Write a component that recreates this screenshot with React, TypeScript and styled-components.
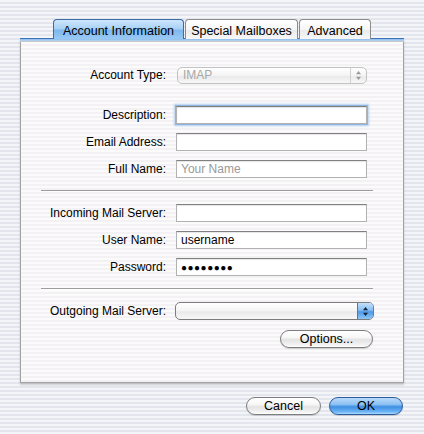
import React from "react";
import styled, { createGlobalStyle } from "styled-components";

const GlobalStyle = createGlobalStyle`
  html, body {
    margin: 0;
    padding: 0;
  }
  body {
    font-family: "Liberation Sans", Arial, sans-serif;
    font-size: 12px;
    color: #000;
  }
`;

const Window = styled.div`
  width: 424px;
  height: 434px;
  box-sizing: border-box;
  padding-top: 19px;
  background: repeating-linear-gradient(
    to bottom,
    #f4f5f8 0px,
    #f4f5f8 2px,
    #e4e6ee 2px,
    #e4e6ee 4px
  );
  overflow: hidden;
`;

const TabBar = styled.div`
  display: flex;
  justify-content: center;
  gap: 1px;
  height: 19px;
  position: relative;
  z-index: 1;
`;

const Tab = styled.div<{ $active?: boolean; $width: number }>`
  width: ${(p) => p.$width}px;
  box-sizing: border-box;
  height: 20px;
  display: flex;
  align-items: center;
  justify-content: center;
  font-size: 12.5px;
  border: 1px solid ${(p) => (p.$active ? "#3e6aa6" : "#8b8b8b")};
  border-bottom: none;
  border-radius: 4px 4px 0 0;
  background: ${(p) =>
    p.$active
      ? "linear-gradient(to bottom, #cfe6fb 0%, #a9d1f6 45%, #7fb8ef 55%, #99c9f5 100%)"
      : "linear-gradient(to bottom, #ffffff 0%, #f6f6f6 50%, #ebebeb 55%, #f7f7f7 100%)"};
  padding-top: 2px;
`;

const Panel = styled.div`
  margin: 0 20px;
  height: 345px;
  box-sizing: border-box;
  border: 1px solid #a3a3a3;
  border-top: none;
  box-shadow: 0 2px 2px rgba(0, 0, 0, 0.18);
  background: repeating-linear-gradient(
    to bottom,
    #fcfbfc 0px,
    #fcfbfc 2px,
    #f3f1f4 2px,
    #f3f1f4 4px
  );
  display: flex;
  flex-direction: column;
`;

const Band = styled.div`
  height: 4px;
  box-sizing: border-box;
  margin: 0 -1px;
  border-top: 1px solid #3f73b8;
  background: linear-gradient(to bottom, #8dbcee, #b7d4ef);
  border-bottom: 1px solid #c9c9c9;
`;

const Row = styled.div<{ $top: number }>`
  display: flex;
  align-items: center;
  height: 18px;
  margin-top: ${(p) => p.$top}px;
`;

const Label = styled.div`
  width: 145px;
  text-align: right;
  white-space: nowrap;
  flex-shrink: 0;
`;

const Field = styled.div<{ $focused?: boolean; $hint?: boolean }>`
  margin-left: 10px;
  width: 191px;
  height: 18px;
  box-sizing: border-box;
  background: #fff;
  border: 1px solid #b2b2b2;
  border-top-color: #808080;
  box-shadow: ${(p) =>
    p.$focused
      ? "0 0 0 1px #8fb4e0, 0 0 2px 2px #b5cfed, inset 0 1px 1px rgba(0,0,0,0.12)"
      : "inset 0 1px 1px rgba(0,0,0,0.1)"};
  display: flex;
  align-items: center;
  padding: 0 4px;
  color: ${(p) => (p.$hint ? "#9a9a9a" : "#000")};
  font-size: 12px;
`;

const Dots = styled.span`
  font-size: 10px;
  letter-spacing: 0.5px;
`;

const Popup = styled.div<{ $disabled?: boolean; $width: number; $offset: number }>`
  margin-left: ${(p) => p.$offset}px;
  width: ${(p) => p.$width}px;
  height: ${(p) => (p.$disabled ? 17 : 18)}px;
  box-sizing: border-box;
  border: 1px solid ${(p) => (p.$disabled ? "#c2c2c2" : "#7c7c7c")};
  border-radius: 5px;
  background: linear-gradient(to bottom, #ffffff 0%, #f4f4f4 50%, #e9e9e9 55%, #f8f8f8 100%);
  display: flex;
  align-items: center;
  overflow: hidden;
  color: #a8a8a8;
  font-size: 12px;
`;

const PopupText = styled.div`
  flex: 1;
  padding-left: 5px;
`;

const PopupArrows = styled.div<{ $blue?: boolean }>`
  width: 15px;
  height: 100%;
  display: flex;
  align-items: center;
  justify-content: center;
  border-left: 1px solid ${(p) => (p.$blue ? "#4a79b8" : "#d0d0d0")};
  background: ${(p) =>
    p.$blue
      ? "linear-gradient(to bottom, #c4e1fa 0%, #88bdf1 45%, #4f98e4 55%, #8cc6f6 100%)"
      : "transparent"};
`;

const Separator = styled.div<{ $top: number }>`
  height: 1px;
  background: #9c9c9c;
  border-bottom: 1px solid #ffffff;
  margin: ${(p) => p.$top}px 30px 0 20px;
`;

const ButtonRow = styled.div<{ $top: number; $right: number }>`
  display: flex;
  justify-content: flex-end;
  gap: 8px;
  margin-top: ${(p) => p.$top}px;
  margin-right: ${(p) => p.$right}px;
`;

const PillButton = styled.div<{ $default?: boolean; $width: number }>`
  width: ${(p) => p.$width}px;
  height: 18px;
  box-sizing: border-box;
  border-radius: 9px;
  border: 1px solid ${(p) => (p.$default ? "#2d5c9e" : "#7d7d7d")};
  background: ${(p) =>
    p.$default
      ? "linear-gradient(to bottom, #b9dafa 0%, #8cc1f3 40%, #3f8fe2 55%, #6ab3f5 85%, #a9d9fc 100%)"
      : "linear-gradient(to bottom, #ffffff 0%, #f7f7f7 40%, #e3e3e3 55%, #f2f2f2 85%, #ffffff 100%)"};
  box-shadow: 0 1px 1px rgba(0, 0, 0, 0.15);
  display: flex;
  align-items: center;
  justify-content: center;
  font-size: 12.5px;
  color: #000;
`;

const Footer = styled.div`
  display: flex;
  justify-content: flex-end;
  gap: 8px;
  margin-top: 14px;
  padding-right: 21px;
`;

const Arrows: React.FC<{ color: string }> = ({ color }) => (
  <svg width="7" height="11" viewBox="0 0 7 11">
    <path d="M3.5 1 L6 4.2 L1 4.2 Z" fill={color} />
    <path d="M3.5 10 L6 6.8 L1 6.8 Z" fill={color} />
  </svg>
);

const App: React.FC = () => {
  return (
    <>
      <GlobalStyle />
      <Window>
        <TabBar>
          <Tab $active $width={131}>Account Information</Tab>
          <Tab $width={113}>Special Mailboxes</Tab>
          <Tab $width={72}>Advanced</Tab>
        </TabBar>
        <Panel>
          <Band />
          <Row $top={24}>
            <Label>Account Type:</Label>
            <Popup $disabled $width={190} $offset={11}>
              <PopupText>IMAP</PopupText>
              <PopupArrows>
                <Arrows color="#9a9a9a" />
              </PopupArrows>
            </Popup>
          </Row>
          <Row $top={22}>
            <Label>Description:</Label>
            <Field $focused />
          </Row>
          <Row $top={9}>
            <Label>Email Address:</Label>
            <Field />
          </Row>
          <Row $top={9}>
            <Label>Full Name:</Label>
            <Field $hint>Your Name</Field>
          </Row>
          <Separator $top={12} />
          <Row $top={12}>
            <Label>Incoming Mail Server:</Label>
            <Field />
          </Row>
          <Row $top={9}>
            <Label>User Name:</Label>
            <Field>username</Field>
          </Row>
          <Row $top={9}>
            <Label>Password:</Label>
            <Field>
              <Dots>●●●●●●●●</Dots>
            </Field>
          </Row>
          <Separator $top={12} />
          <Row $top={12}>
            <Label>Outgoing Mail Server:</Label>
            <Popup $width={199} $offset={9}>
              <PopupText />
              <PopupArrows $blue>
                <Arrows color="#10243f" />
              </PopupArrows>
            </Popup>
          </Row>
          <ButtonRow $top={10} $right={30}>
            <PillButton $width={93}>Options...</PillButton>
          </ButtonRow>
        </Panel>
        <Footer>
          <PillButton $width={75}>Cancel</PillButton>
          <PillButton $default $width={74}>OK</PillButton>
        </Footer>
      </Window>
    </>
  );
};

export default App;
